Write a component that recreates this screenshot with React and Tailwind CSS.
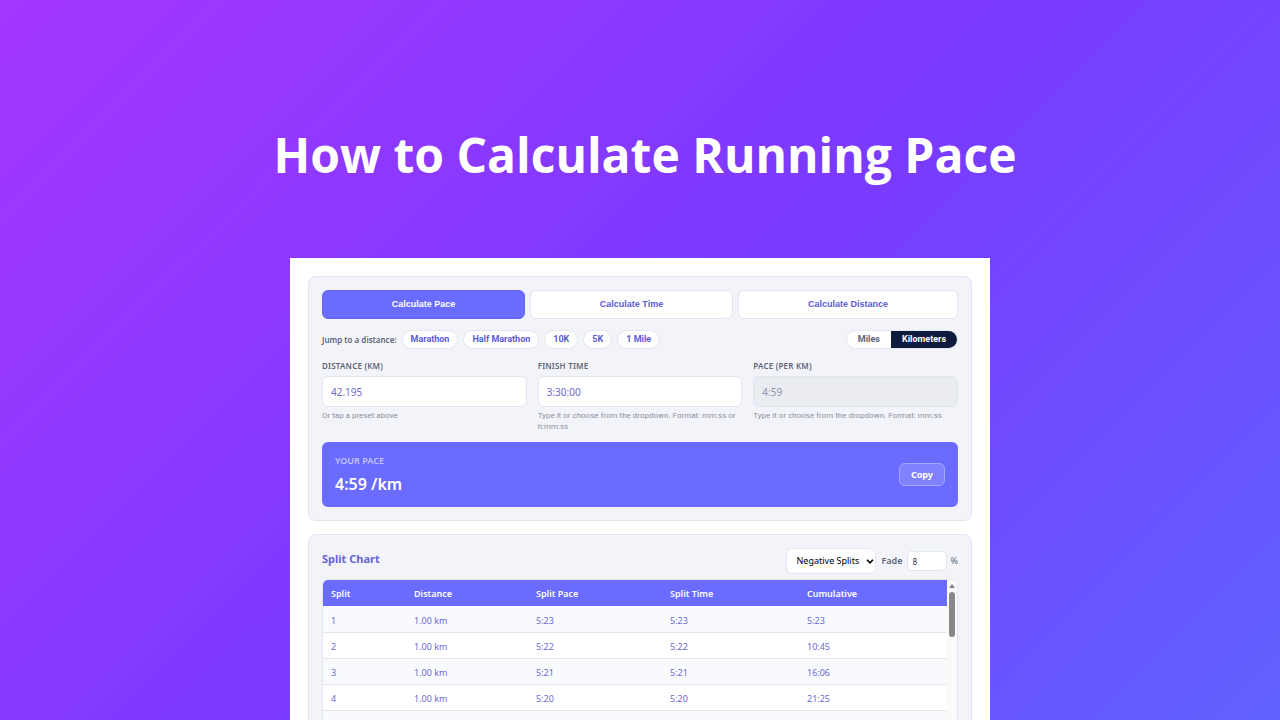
import { useState } from 'react'

const TABS = ['Calculate Pace', 'Calculate Time', 'Calculate Distance']
const PRESETS = ['Marathon', 'Half Marathon', '10K', '5K', '1 Mile']
const UNITS = ['Miles', 'Kilometers']
const COLUMNS = ['Split', 'Distance', 'Split Pace', 'Split Time', 'Cumulative']

const SPLITS = [
  ['1', '1.00 km', '5:23', '5:23', '5:23'],
  ['2', '1.00 km', '5:22', '5:22', '10:45'],
  ['3', '1.00 km', '5:21', '5:21', '16:06'],
  ['4', '1.00 km', '5:20', '5:20', '21:25'],
  ['5', '1.00 km', '5:19', '5:19', '26:44'],
]

const panelClass = 'rounded-lg border border-[#e3e5ef] bg-[#f3f4fa] p-[13px]'

function Field({ id, label, hint, ...props }) {
  return (
    <div className="flex flex-col">
      <label
        htmlFor={id}
        className="text-[8px] leading-3 font-semibold tracking-wide text-[#5d6478] uppercase"
      >
        {label}
      </label>
      <input
        id={id}
        type="text"
        aria-describedby={`${id}-hint`}
        className="mt-1 h-[31px] w-full rounded-md border border-[#e3e5ef] bg-white px-2 text-[10px] text-[#6a6bd0] outline-none disabled:bg-[#ebecf2] disabled:text-[#9095ab]"
        {...props}
      />
      <p
        id={`${id}-hint`}
        className="mt-[3px] font-[Roboto,sans-serif] text-[8px] leading-[11px] text-[#8b90a0]"
      >
        {hint}
      </p>
    </div>
  )
}

function Calculator() {
  const [tab, setTab] = useState(TABS[0])
  const [unit, setUnit] = useState('Kilometers')
  const [distance, setDistance] = useState('42.195')
  const [finish, setFinish] = useState('3:30:00')

  return (
    <section className={panelClass}>
      <div className="grid grid-cols-[203fr_203fr_220fr] gap-[5px]">
        {TABS.map((name) => (
          <button
            key={name}
            type="button"
            onClick={() => setTab(name)}
            className={`h-[29px] rounded-md border font-['Liberation_Sans',sans-serif] text-[9px] font-bold ${
              tab === name
                ? 'border-[#6366f1] bg-[#6a6cff] text-white'
                : 'border-[#e3e5ef] bg-white text-[#5b5bd6]'
            }`}
          >
            {name}
          </button>
        ))}
      </div>

      <div className="mt-[11px] flex items-center justify-between">
        <div className="flex items-center gap-[5px]">
          <span className="text-[8px] font-semibold text-[#5d6478]">Jump to a distance:</span>
          {PRESETS.map((name) => (
            <button
              key={name}
              type="button"
              className="h-[19px] rounded-full border border-[#e3e5ef] bg-white px-2 font-[Roboto,sans-serif] text-[9px] font-bold text-[#5b5bd6]"
            >
              {name}
            </button>
          ))}
        </div>
        <div className="flex h-[19px] overflow-hidden rounded-full border border-[#e3e5ef] bg-white">
          {UNITS.map((name) => (
            <button
              key={name}
              type="button"
              onClick={() => setUnit(name)}
              className={`px-[11px] font-[Roboto,sans-serif] text-[9px] font-bold ${
                unit === name ? 'bg-[#0f1b3d] text-white' : 'text-[#5d6478]'
              }`}
            >
              {name}
            </button>
          ))}
        </div>
      </div>

      <div className="mt-[11px] grid grid-cols-3 gap-[11px]">
        <Field
          id="distance"
          label="Distance (km)"
          hint="Or tap a preset above"
          value={distance}
          onChange={(e) => setDistance(e.target.value)}
        />
        <Field
          id="finish"
          label="Finish time"
          hint="Type it or choose from the dropdown. Format: mm:ss or h:mm:ss"
          value={finish}
          onChange={(e) => setFinish(e.target.value)}
        />
        <Field
          id="pace"
          label="Pace (per km)"
          hint="Type it or choose from the dropdown. Format: mm:ss"
          value="4:59"
          disabled
        />
      </div>

      <div className="mt-[10px] flex items-center justify-between rounded-md bg-[#6a6cff] px-[13px] py-3">
        <div>
          <p className="text-[9px] leading-[14px] font-semibold text-[#c3c4ff] uppercase">Your pace</p>
          <p className="mt-[6px] text-base leading-[21px] font-semibold text-white">4:59 /km</p>
        </div>
        <button
          type="button"
          className="h-[23px] rounded-md border border-[#a5a6ff] bg-[#7f81ff] px-[11px] text-[9px] font-bold text-white"
        >
          Copy
        </button>
      </div>
    </section>
  )
}

function SplitChart() {
  const [fade, setFade] = useState('8')

  return (
    <section className={panelClass}>
      <div className="flex items-start justify-between">
        <h2 className="pt-[3px] text-[11px] leading-4 font-bold text-[#6564d8]">Split Chart</h2>
        <div className="flex items-center text-[9px] font-semibold text-[#5d6478]">
          <div className="relative">
            <select
              aria-label="Split strategy"
              className="h-[26px] w-[90px] appearance-none rounded-md border border-[#e3e5ef] bg-white pl-[10px] text-[9px] font-normal text-black"
            >
              <option>Negative Splits</option>
              <option>Even Splits</option>
              <option>Positive Splits</option>
            </select>
            <svg
              viewBox="0 0 8 5"
              className="pointer-events-none absolute top-[11px] right-[2px] h-[5px] w-2 fill-none stroke-black stroke-[1.6]"
            >
              <path d="M1 .8 4 3.8 7 .8" />
            </svg>
          </div>
          <label htmlFor="fade" className="ml-[6px]">
            Fade
          </label>
          <input
            id="fade"
            type="text"
            value={fade}
            onChange={(e) => setFade(e.target.value)}
            className="mx-1 h-5 w-10 rounded border border-[#e3e5ef] bg-white px-[5px] text-[8px] font-normal text-[#333] outline-none"
          />
          <span className="font-normal">%</span>
        </div>
      </div>

      <div className="mt-[5px] flex overflow-hidden rounded-md border border-[#e3e5ef] bg-white">
        <table className="grow table-fixed border-collapse text-left text-[9px]">
          <colgroup>
            <col className="w-[83px]" />
            <col className="w-[122px]" />
            <col className="w-[134px]" />
            <col className="w-[137px]" />
            <col className="w-[148px]" />
          </colgroup>
          <thead>
            <tr className="h-[26px] bg-[#6a6cff] text-white">
              {COLUMNS.map((name) => (
                <th key={name} className="px-2 pt-[2px] pb-0 font-semibold">
                  {name}
                </th>
              ))}
            </tr>
          </thead>
          <tbody>
            {SPLITS.map((row) => (
              <tr key={row[0]} className="h-[26px] border-b border-[#e3e5ef] text-[#6a6bd0] odd:bg-[#f9fafd]">
                {row.map((cell, i) => (
                  <td key={COLUMNS[i]} className="px-2 pt-[3px] pb-0">
                    {cell}
                  </td>
                ))}
              </tr>
            ))}
          </tbody>
        </table>
        {/* scroll track */}
        <div className="flex w-[10px] flex-col items-center bg-[#fafafa] pt-1" aria-hidden="true">
          <svg viewBox="0 0 6 4" className="h-1 w-[6px] fill-[#808080]">
            <path d="M3 0 6 4H0z" />
          </svg>
          <div className="mt-1 h-[45px] w-[6px] rounded-full bg-[#888]" />
        </div>
      </div>
    </section>
  )
}

export default function App() {
  return (
    <main className="flex h-screen flex-col items-center overflow-hidden bg-[linear-gradient(135deg,#a436ff_0%,#7a3aff_52%,#6062ff_100%)] font-['Noto_Sans','Open_Sans',sans-serif]">
      <h1 className="pt-[120px] pl-[10px] text-center font-['Open_Sans',sans-serif] text-5xl leading-[70px] font-bold text-white">
        How to Calculate Running Pace
      </h1>
      <div className="mt-[68px] flex w-full max-w-[700px] shrink-0 flex-col gap-[13px] bg-white p-[18px]">
        <Calculator />
        <SplitChart />
      </div>
    </main>
  )
}
